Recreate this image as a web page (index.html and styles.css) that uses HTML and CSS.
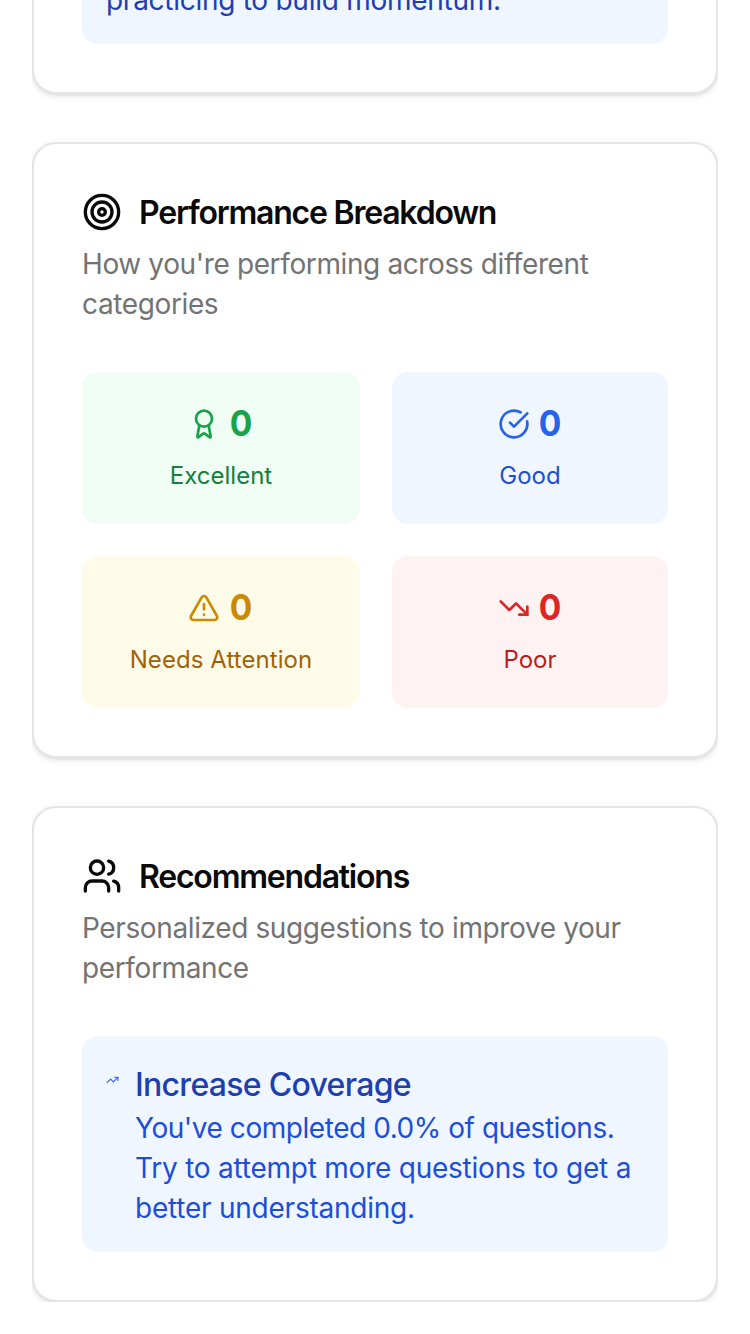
FILE: index.html
```html
<!DOCTYPE html>
<html lang="en">
<head>
<meta charset="utf-8">
<title>Performance</title>
<link rel="stylesheet" href="styles.css">
</head>
<body>
<main class="stack">
  <section class="card card-previous">
    <div class="notice"><p class="notice-text">practicing to build momentum.</p></div>
  </section>

  <section class="card">
    <header class="card-header">
      <h2 class="card-title">
        <svg class="icon icon-lg" viewBox="0 0 24 24"><circle cx="12" cy="12" r="10"/><circle cx="12" cy="12" r="6"/><circle cx="12" cy="12" r="2"/></svg>
        <span class="title-text">Performance Breakdown</span>
      </h2>
      <p class="card-desc">How you're performing across different<br>categories</p>
    </header>
    <div class="tiles">
      <div class="tile tile-green">
        <div class="tile-value"><svg class="icon icon-md" viewBox="0 0 24 24"><path d="m15.477 12.89 1.515 8.526a.5.5 0 0 1-.81.47l-3.58-2.687a1 1 0 0 0-1.197 0l-3.586 2.686a.5.5 0 0 1-.81-.469l1.514-8.526"/><circle cx="12" cy="8" r="6"/></svg><span class="count">0</span></div>
        <p class="tile-label">Excellent</p>
      </div>
      <div class="tile tile-blue">
        <div class="tile-value"><svg class="icon icon-md" viewBox="0 0 24 24"><path d="M21.801 10A10 10 0 1 1 17 3.335"/><path d="m9 11 3 3L22 4"/></svg><span class="count">0</span></div>
        <p class="tile-label">Good</p>
      </div>
      <div class="tile tile-yellow">
        <div class="tile-value"><svg class="icon icon-md" viewBox="0 0 24 24"><path d="m21.73 18-8-14a2 2 0 0 0-3.48 0l-8 14A2 2 0 0 0 4 21h16a2 2 0 0 0 1.73-3"/><path d="M12 9v4"/><path d="M12 17h.01"/></svg><span class="count">0</span></div>
        <p class="tile-label tile-label-long">Needs Attention</p>
      </div>
      <div class="tile tile-red">
        <div class="tile-value"><svg class="icon icon-md" viewBox="0 0 24 24"><path d="M16 17h6v-6"/><path d="m22 17-8.5-8.5-5 5L2 7"/></svg><span class="count">0</span></div>
        <p class="tile-label">Poor</p>
      </div>
    </div>
  </section>

  <section class="card">
    <header class="card-header">
      <h2 class="card-title">
        <svg class="icon icon-lg" viewBox="0 0 24 24"><path d="M16 21v-2a4 4 0 0 0-4-4H6a4 4 0 0 0-4 4v2"/><path d="M16 3.128a4 4 0 0 1 0 7.744"/><path d="M22 21v-2a4 4 0 0 0-3-3.87"/><circle cx="9" cy="7" r="4"/></svg>
        <span class="title-text">Recommendations</span>
      </h2>
      <p class="card-desc">Personalized suggestions to improve your<br>performance</p>
    </header>
    <div class="tip">
      <svg class="icon tip-icon" viewBox="0 0 24 24"><path d="M16 7h6v6"/><path d="m22 7-8.5 8.5-5-5L2 17"/></svg>
      <div class="tip-body">
        <h3 class="tip-title">Increase Coverage</h3>
        <p class="tip-text"><span class="tip-lead">You've completed 0.0% of questions.</span><br>Try to attempt more questions to get a<br>better understanding.</p>
      </div>
    </div>
  </section>
</main>
</body>
</html>
```

FILE: styles.css
```css
* { box-sizing: border-box; margin: 0; padding: 0; }
html, body { background: #fff; overflow: hidden; }
body { font-family: Inter, "Noto Sans", sans-serif; color: #0a0a0a; }

.stack { display: flex; flex-direction: column; gap: 48px; margin: 0 32px; height: 1302px; overflow: hidden; }
.card { flex: none; background: #fff; border: 2px solid #e5e5e5; border-radius: 24px; padding: 48px; box-shadow: 0 2px 6px rgba(0, 0, 0, .1), 0 2px 4px -2px rgba(0, 0, 0, .1); }
.card-previous { height: 94px; border-top: 0; border-radius: 0 0 24px 24px; padding-top: 0; }

.notice { display: flex; align-items: flex-end; height: 44px; padding: 0 24px 24px; background: #eff6ff; border-radius: 0 0 16px 16px; }
.notice-text { font-size: 28px; line-height: 40px; letter-spacing: -0.27px; color: #1e40af; white-space: nowrap; }

.card-header { display: flex; flex-direction: column; gap: 12px; margin-bottom: 48px; }
.card-title { display: flex; align-items: center; gap: 16px; height: 40px; font-size: 32px; line-height: 40px; font-weight: 600; letter-spacing: -1.22px; white-space: nowrap; }
.title-text { padding: 2px 0 0 1px; }
.card-desc { font-size: 28px; line-height: 40px; letter-spacing: -0.38px; color: #737373; white-space: nowrap; }

.icon { flex: none; fill: none; stroke: currentColor; stroke-width: 2; stroke-linecap: round; stroke-linejoin: round; }
.icon-lg { width: 40px; height: 40px; }
.icon-md { width: 32px; height: 32px; }

.tiles { display: grid; grid-template-columns: 278px 276px; gap: 32px; }
.tile { display: flex; flex-direction: column; gap: 16px; height: 152px; padding: 32px 0; border-radius: 16px; text-align: center; }
.tile-value { display: flex; align-items: center; justify-content: center; gap: 8px; height: 40px; }
.count { width: 26px; padding-bottom: 2px; font-size: 36px; line-height: 40px; font-weight: 700; transform: scaleX(.93); }
.tile-label { font-size: 24px; line-height: 32px; }
.tile-label-long { letter-spacing: .07px; }
.tile-green { background: #f0fdf4; }
.tile-green .tile-value { color: #16a34a; }
.tile-green .tile-label { color: #15803d; }
.tile-blue { background: #eff6ff; }
.tile-blue .tile-value { color: #2563eb; }
.tile-blue .tile-label { color: #1d4ed8; }
.tile-yellow { background: #fefce8; }
.tile-yellow .tile-value { color: #ca8a04; }
.tile-yellow .tile-label { color: #a16207; }
.tile-red { background: #fef2f2; }
.tile-red .tile-value { color: #dc2626; }
.tile-red .tile-label { color: #b91c1c; }
.tile-blue .count, .tile-red .count { width: 24px; }

.tip { display: flex; gap: 16px; padding: 24px; background: #eff6ff; border-radius: 16px; }
.tip-icon { width: 13px; height: 40px; color: #2563eb; }
.tip-title { height: 48px; padding-top: 1px; font-size: 32px; line-height: 48px; font-weight: 500; letter-spacing: -0.7px; color: #1e40af; white-space: nowrap; }
.tip-text { font-size: 28px; line-height: 40px; letter-spacing: -0.23px; color: #1d4ed8; white-space: nowrap; }
.tip-lead { letter-spacing: -0.45px; }
```
